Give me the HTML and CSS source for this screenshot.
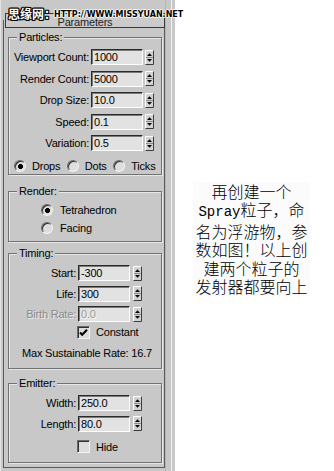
FILE: index.html
```html
<!DOCTYPE html>
<html>
<head>
<meta charset="utf-8">
<link rel="stylesheet" href="styles.css">
</head>
<body>
<div class="page">
  <div class="panel">
    <div class="rollout">
      <div class="rollout-head">Parameters</div>

      <div class="group particles">
        <span class="legend">Particles:</span>
        <div class="rows">
          <div class="row"><span class="lbl">Viewport Count:</span><span class="field">1000</span><svg class="spin" width="9" height="15" viewBox="0 0 9 15"><rect width="9" height="15" fill="#d2d2d2"/><path d="M0.5 14.5V0.5H8.5" stroke="#fff" fill="none"/><path d="M0.5 14.5H8.5V0.5" stroke="#3c3c3c" fill="none"/><path d="M1 7.5H8" stroke="#8a8a8a"/><polygon points="2,6 4.5,3.2 7,6" fill="#000"/><polygon points="2,9 7,9 4.5,11.8" fill="#000"/></svg></div>
          <div class="row"><span class="lbl">Render Count:</span><span class="field">5000</span><svg class="spin" width="9" height="15" viewBox="0 0 9 15"><rect width="9" height="15" fill="#d2d2d2"/><path d="M0.5 14.5V0.5H8.5" stroke="#fff" fill="none"/><path d="M0.5 14.5H8.5V0.5" stroke="#3c3c3c" fill="none"/><path d="M1 7.5H8" stroke="#8a8a8a"/><polygon points="2,6 4.5,3.2 7,6" fill="#000"/><polygon points="2,9 7,9 4.5,11.8" fill="#000"/></svg></div>
          <div class="row"><span class="lbl">Drop Size:</span><span class="field">10.0</span><svg class="spin" width="9" height="15" viewBox="0 0 9 15"><rect width="9" height="15" fill="#d2d2d2"/><path d="M0.5 14.5V0.5H8.5" stroke="#fff" fill="none"/><path d="M0.5 14.5H8.5V0.5" stroke="#3c3c3c" fill="none"/><path d="M1 7.5H8" stroke="#8a8a8a"/><polygon points="2,6 4.5,3.2 7,6" fill="#000"/><polygon points="2,9 7,9 4.5,11.8" fill="#000"/></svg></div>
          <div class="row"><span class="lbl">Speed:</span><span class="field">0.1</span><svg class="spin" width="9" height="15" viewBox="0 0 9 15"><rect width="9" height="15" fill="#d2d2d2"/><path d="M0.5 14.5V0.5H8.5" stroke="#fff" fill="none"/><path d="M0.5 14.5H8.5V0.5" stroke="#3c3c3c" fill="none"/><path d="M1 7.5H8" stroke="#8a8a8a"/><polygon points="2,6 4.5,3.2 7,6" fill="#000"/><polygon points="2,9 7,9 4.5,11.8" fill="#000"/></svg></div>
          <div class="row"><span class="lbl">Variation:</span><span class="field">0.5</span><svg class="spin" width="9" height="15" viewBox="0 0 9 15"><rect width="9" height="15" fill="#d2d2d2"/><path d="M0.5 14.5V0.5H8.5" stroke="#fff" fill="none"/><path d="M0.5 14.5H8.5V0.5" stroke="#3c3c3c" fill="none"/><path d="M1 7.5H8" stroke="#8a8a8a"/><polygon points="2,6 4.5,3.2 7,6" fill="#000"/><polygon points="2,9 7,9 4.5,11.8" fill="#000"/></svg></div>
        </div>
        <div class="radio-row">
          <span class="opt"><span class="radio on"></span>Drops</span>
          <span class="opt"><span class="radio"></span>Dots</span>
          <span class="opt"><span class="radio"></span>Ticks</span>
        </div>
      </div>

      <div class="group render">
        <span class="legend">Render:</span>
        <div class="opt-col">
          <span class="opt"><span class="radio on"></span>Tetrahedron</span>
          <span class="opt"><span class="radio"></span>Facing</span>
        </div>
      </div>

      <div class="group timing">
        <span class="legend">Timing:</span>
        <div class="rows tight">
          <div class="row"><span class="lbl">Start:</span><span class="field">-300</span><svg class="spin" width="9" height="15" viewBox="0 0 9 15"><rect width="9" height="15" fill="#d2d2d2"/><path d="M0.5 14.5V0.5H8.5" stroke="#fff" fill="none"/><path d="M0.5 14.5H8.5V0.5" stroke="#3c3c3c" fill="none"/><path d="M1 7.5H8" stroke="#8a8a8a"/><polygon points="2,6 4.5,3.2 7,6" fill="#000"/><polygon points="2,9 7,9 4.5,11.8" fill="#000"/></svg></div>
          <div class="row"><span class="lbl">Life:</span><span class="field">300</span><svg class="spin" width="9" height="15" viewBox="0 0 9 15"><rect width="9" height="15" fill="#d2d2d2"/><path d="M0.5 14.5V0.5H8.5" stroke="#fff" fill="none"/><path d="M0.5 14.5H8.5V0.5" stroke="#3c3c3c" fill="none"/><path d="M1 7.5H8" stroke="#8a8a8a"/><polygon points="2,6 4.5,3.2 7,6" fill="#000"/><polygon points="2,9 7,9 4.5,11.8" fill="#000"/></svg></div>
          <div class="row disabled"><span class="lbl">Birth Rate:</span><span class="field">0.0</span><svg class="spin" width="9" height="15" viewBox="0 0 9 15"><rect width="9" height="15" fill="#d2d2d2"/><path d="M0.5 14.5V0.5H8.5" stroke="#fff" fill="none"/><path d="M0.5 14.5H8.5V0.5" stroke="#3c3c3c" fill="none"/><path d="M1 7.5H8" stroke="#8a8a8a"/><polygon points="2,6 4.5,3.2 7,6" fill="#000"/><polygon points="2,9 7,9 4.5,11.8" fill="#000"/></svg></div>
        </div>
        <div class="check-row constant"><span class="check"><svg width="11" height="11" viewBox="0 0 11 11"><path d="M2 5.5L4.2 7.8L9 2.8" stroke="#000" stroke-width="2" fill="none"/></svg></span>Constant</div>
        <div class="max-rate">Max Sustainable Rate: 16.7</div>
      </div>

      <div class="group emitter">
        <span class="legend">Emitter:</span>
        <div class="rows tight">
          <div class="row"><span class="lbl">Width:</span><span class="field">250.0</span><svg class="spin" width="9" height="15" viewBox="0 0 9 15"><rect width="9" height="15" fill="#d2d2d2"/><path d="M0.5 14.5V0.5H8.5" stroke="#fff" fill="none"/><path d="M0.5 14.5H8.5V0.5" stroke="#3c3c3c" fill="none"/><path d="M1 7.5H8" stroke="#8a8a8a"/><polygon points="2,6 4.5,3.2 7,6" fill="#000"/><polygon points="2,9 7,9 4.5,11.8" fill="#000"/></svg></div>
          <div class="row"><span class="lbl">Length:</span><span class="field">80.0</span><svg class="spin" width="9" height="15" viewBox="0 0 9 15"><rect width="9" height="15" fill="#d2d2d2"/><path d="M0.5 14.5V0.5H8.5" stroke="#fff" fill="none"/><path d="M0.5 14.5H8.5V0.5" stroke="#3c3c3c" fill="none"/><path d="M1 7.5H8" stroke="#8a8a8a"/><polygon points="2,6 4.5,3.2 7,6" fill="#000"/><polygon points="2,9 7,9 4.5,11.8" fill="#000"/></svg></div>
        </div>
        <div class="check-row hide"><span class="check"></span>Hide</div>
      </div>
    </div>
  </div>
  <div class="strip"></div>
  <div class="note">
    <p class="note-text">再创建一个<br><span class="latin">Spray</span>粒子，命<br>名为浮游物，参<br>数如图！以上创<br>建两个粒子的<br>发射器都要向上</p>
  </div>
  <div class="watermark"><span class="wm-cn">思缘网：</span><span class="wm-url">HTTP://WWW.MISSYUAN.NET</span></div>
</div>
</body>
</html>
```

FILE: styles.css
```css
html, body {
  margin: 0;
  padding: 0;
  background: #ffffff;
}

.page {
  position: relative;
  width: 334px;
  height: 471px;
  display: flex;
  overflow: hidden;
  font-family: "Liberation Sans", Arial, sans-serif;
  font-size: 11px;
  letter-spacing: -0.2px;
  color: #000;
}

.panel {
  width: 165px;
  height: 471px;
  background: #c8c8c8;
  box-sizing: border-box;
  padding-left: 3px;
  box-shadow: inset 1px 0 0 #e4e4e4;
}

.rollout {
  margin-top: 20px;
  width: 162px;
  box-sizing: border-box;
  border: 1px solid #5a5a5a;
  border-top: none;
  padding-bottom: 4px;
  display: flex;
  flex-direction: column;
}

.rollout-head {
  margin-top: -7px;
  margin-left: 1px;
  margin-right: -1px;
  height: 15px;
  box-sizing: border-box;
  border: 1px solid #3a3a3a;
  background: #cbcbcb;
  text-align: center;
  line-height: 16px;
  color: #222;
}

.group {
  position: relative;
  margin-left: 4px;
  margin-right: 2px;
  border: 1px solid #727272;
  box-shadow: 1px 1px 0 #e6e6e6, inset 1px 1px 0 #e6e6e6;
}

.legend {
  position: absolute;
  top: -7px;
  left: 8px;
  padding: 0 2px;
  line-height: 13px;
  background: #c8c8c8;
}

.particles { margin-top: 9px; padding: 11px 0 1px 0; }
.render    { margin-top: 16px; padding: 11px 0 6px 0; }
.timing    { margin-top: 11px; padding: 11px 0 8.5px 0; }
.emitter   { margin-top: 14px; padding: 11px 0 8px 0; }

.rows {
  display: flex;
  flex-direction: column;
  gap: 5.5px;
}
.rows.tight { gap: 4.5px; }

.row {
  display: grid;
  grid-template-columns: 80px 52px 9px;
  column-gap: 2px;
  align-items: center;
  height: 16px;
}
.timing .row, .emitter .row {
  grid-template-columns: 67px 52px 9px;
  column-gap: 2px;
}
.timing .spin, .emitter .spin { margin-left: 1px; }

.lbl {
  text-align: right;
  white-space: nowrap;
  line-height: 16px;
}

.field {
  height: 16px;
  box-sizing: border-box;
  background: #e2e2e2;
  border: 1px solid;
  border-color: #2a2a2a #ffffff #ffffff #2a2a2a;
  box-shadow: inset 1px 1px 0 #7a7a7a;
  padding-left: 2px;
  line-height: 14px;
  white-space: nowrap;
}

.spin { display: block; }

.disabled .lbl {
  color: #8a8a8a;
  text-shadow: 1px 1px 0 #ececec;
}
.disabled .field {
  color: #9a9a9a;
  text-shadow: 1px 1px 0 #f4f4f4;
}

.radio-row {
  display: flex;
  gap: 6.5px;
  height: 14px;
  margin-top: 8px;
  padding-left: 5px;
  align-items: center;
}

.opt {
  display: flex;
  align-items: center;
  gap: 6px;
  height: 14px;
  white-space: nowrap;
}

.radio {
  width: 12px;
  height: 12px;
  box-sizing: border-box;
  border-radius: 50%;
  border: 1px solid;
  border-color: #6a6a6a #f4f4f4 #f4f4f4 #6a6a6a;
  background: #dedede;
  box-shadow: inset 1px 1px 0 #303030;
  flex: none;
}
.radio.on {
  background: radial-gradient(circle at 55% 55%, #000 0, #000 2.2px, #dedede 2.8px);
}

.opt-col {
  display: flex;
  flex-direction: column;
  gap: 4px;
  padding-left: 32px;
}
.opt-col .opt { gap: 7px; }

.check-row {
  display: flex;
  align-items: center;
  gap: 6px;
  height: 14px;
  padding-left: 68px;
}
.constant { margin-top: 3px; }
.hide { margin-top: 8px; }

.check {
  width: 13px;
  height: 13px;
  box-sizing: border-box;
  border: 1px solid;
  border-color: #6a6a6a #f4f4f4 #f4f4f4 #6a6a6a;
  box-shadow: inset 1px 1px 0 #303030;
  background: #dcdcdc;
  display: flex;
  align-items: center;
  justify-content: center;
  flex: none;
}
.check svg { display: block; }

.max-rate {
  margin-top: 7.5px;
  padding-left: 13px;
  line-height: 13px;
  white-space: nowrap;
}

.strip {
  width: 10px;
  height: 471px;
  background: #c8c8c8;
  box-sizing: border-box;
  border-left: 1px solid #b4b4b4;
  box-shadow: inset -3px 0 0 #c8c8c8, inset -4px 0 0 #f2f2f2;
  flex: none;
}

.note {
  flex: 1;
  display: flex;
  align-items: center;
  justify-content: center;
  padding: 6.5px 6px 0 0;
  background: #ffffff;
}

.note-text {
  margin: 0;
  font-family: "Noto Sans CJK SC", "Noto Sans CJK JP", sans-serif;
  font-weight: 300;
  font-size: 16px;
  line-height: 18.5px;
  letter-spacing: 0;
  text-align: center;
  color: #000;
  background: #fbfbfb;
  padding: 0 2px;
}

.latin {
  font-family: "Liberation Mono", monospace;
  font-size: 14px;
}

.watermark {
  position: absolute;
  left: 8px;
  top: 6px;
  display: flex;
  align-items: center;
  letter-spacing: 0;
  white-space: nowrap;
}

.wm-cn {
  font-family: "Noto Sans CJK SC", sans-serif;
  font-weight: 700;
  font-size: 12px;
  line-height: 15px;
  color: #ffffff;
  text-shadow: 1px 0 0 #000, -1px 0 0 #000, 0 1px 0 #000, 0 -1px 0 #000,
               1px 1px 0 #000, -1px -1px 0 #000, 1px -1px 0 #000, -1px 1px 0 #000;
}

.wm-url {
  margin-left: -2px;
  margin-top: 2px;
  font-family: "DejaVu Sans", sans-serif;
  font-weight: 700;
  font-size: 8px;
  color: #000;
  text-shadow: 1px 0 0 #fff, -1px 0 0 #fff, 0 1px 0 #fff, 0 -1px 0 #fff;
}
```
